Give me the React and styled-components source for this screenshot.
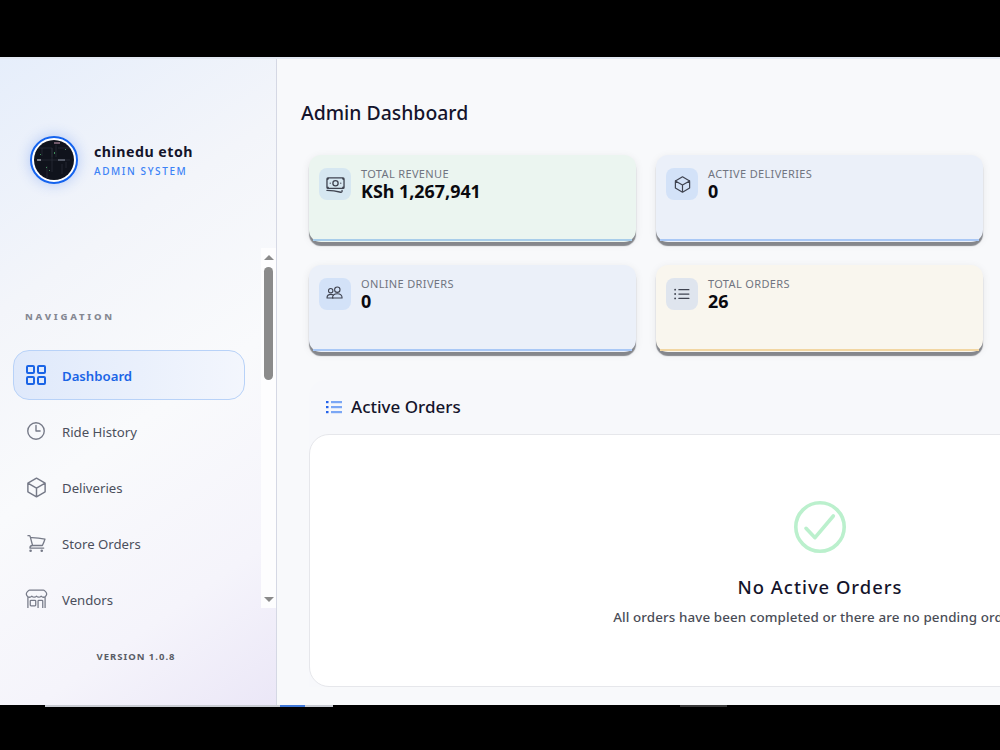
import styled, { createGlobalStyle } from 'styled-components';
import { LayoutGrid } from 'lucide-react';
import {
  HiOutlineClock, HiOutlineCube, HiOutlineShoppingCart,
  HiOutlineBuildingStorefront, HiOutlineBanknotes, HiOutlineListBullet,
} from 'react-icons/hi2';

const GlobalStyle = createGlobalStyle`
  html, body { margin:0; padding:0; height:100%; background:#000; overflow:hidden; }
  * { box-sizing:border-box; }
  body { font-family:"Noto Sans","Open Sans",Arial,sans-serif; }
`;

/* ─── Window ── */
const Screen = styled.div`
  width:1000px; height:750px; display:flex; flex-direction:column; background:#000; overflow:hidden;
`;
const TopBar = styled.div`height:57px; flex-shrink:0; background:#000;`;
const Frame = styled.div`
  height:648px; flex-shrink:0; display:flex; overflow:hidden;
  border-top:2px solid #e3e9f3; background:#f8f9fb;
`;
const BottomBar = styled.div`height:45px; flex-shrink:0; background:#000; display:flex; align-items:flex-start;`;
const StripPart = styled.div`
  height:2px; width:${p => p.$w}px; background:${p => p.$color || 'transparent'}; flex-shrink:0;
`;

/* ─── Sidebar ── */
const Sidebar = styled.aside`
  width:277px; flex-shrink:0; display:flex; flex-direction:column;
  border-right:1px solid #d5d8e4;
  background:linear-gradient(145deg,#e6eefb 0%,#f3f5fa 30%,#f9fafc 55%,#f5f4fb 80%,#ebe7f7 100%);
`;
const Profile = styled.div`
  height:189px; flex-shrink:0; padding:13px 0 0 30px; display:flex; align-items:center; gap:16px;
`;
const Avatar = styled.div`
  width:48px; height:48px; border-radius:50%; flex-shrink:0; padding:2px;
  border:2px solid #1463ee; background:#fff;
  box-shadow:0 0 14px rgba(37,99,235,0.3);
  svg { display:block; width:100%; height:100%; border-radius:50%; }
`;
const ProfileText = styled.div`padding-top:1px;`;
const ProfileName = styled.div`font-size:14.2px; font-weight:700; color:#14142b; letter-spacing:0.5px; line-height:18px;`;
const ProfileRole = styled.div`
  font-size:10px; font-weight:500; color:#3b82f6; letter-spacing:1.6px; line-height:14px; margin-top:3px;
`;

const NavArea = styled.div`height:360px; flex-shrink:0; display:flex; overflow:hidden;`;
const NavList = styled.nav`
  width:261px; flex-shrink:0; padding:62px 16px 0 13px; display:flex; flex-direction:column; gap:6px;
`;
const NavHeading = styled.div`
  font-size:9.5px; font-weight:800; color:#858892; letter-spacing:2.75px; line-height:14px;
  margin:0 0 20px 12px;
`;
const NavItem = styled.a`
  height:50px; flex-shrink:0; display:flex; align-items:center; padding:0 10px;
  border-radius:16px; font-size:13.2px; font-weight:${p => p.$active ? 600 : 400};
  color:${p => p.$active ? '#1a64e6' : '#4b4f5c'};
  border:1px solid ${p => p.$active ? '#b8d2f8' : 'transparent'};
  background:${p => p.$active ? 'linear-gradient(90deg,#dfe9fb,#f3f6fd)' : 'transparent'};
  svg { flex-shrink:0; color:${p => p.$active ? '#1a64e6' : '#767a88'}; }
`;
const NavIconSlot = styled.span`
  width:24px; height:24px; margin-right:14px; flex-shrink:0;
  display:flex; align-items:center; justify-content:center;
`;
const NavText = styled.span`padding-top:2px;`;

const ScrollTrack = styled.div`
  width:15px; flex-shrink:0; background:#fdfdfe; display:flex; flex-direction:column; align-items:center;
`;
const ScrollArrow = styled.div`
  width:0; height:0; flex-shrink:0; margin:${p => p.$down ? 'auto 0 6px' : '7px 0 7px'};
  border-left:5px solid transparent; border-right:5px solid transparent;
  ${p => p.$down ? 'border-top:5px solid #8a8a8a;' : 'border-bottom:5px solid #8a8a8a;'}
`;
const ScrollThumb = styled.div`width:9px; height:113px; border-radius:5px; background:#8b8b8b;`;

const Version = styled.div`
  flex:1; display:flex; align-items:center; justify-content:center;
  font-size:9.5px; font-weight:700; color:#595c66; letter-spacing:1px; padding:0 4px 0 0;
`;

/* ─── Main ── */
const Main = styled.main`flex:1; min-width:0; overflow:hidden; padding:40px 0 0 24px;`;
const PageTitle = styled.h1`
  margin:0; font-size:19.4px; font-weight:500; color:#14142b; line-height:28px;
`;
const Content = styled.div`padding:28px 0 0 8px;`;
const StatsGrid = styled.div`display:grid; grid-template-columns:327px 327px; gap:23px 20px;`;
const StatCard = styled.div`
  height:87px; border-radius:12px; background:${p => p.$bg}; display:flex; flex-direction:column;
  box-shadow:0 4px 1px #85878c, 0 2px 8px rgba(0,0,0,0.08);
`;
const StatBody = styled.div`flex:1; display:flex; gap:10px; padding:13px 10px 0;`;
const IconWrap = styled.div`
  width:32px; height:32px; border-radius:8px; flex-shrink:0; background:${p => p.$bg};
  display:flex; align-items:center; justify-content:center;
  svg { color:#3f4350; }
`;
const StatLbl = styled.div`
  font-size:11px; color:#707480; letter-spacing:0.35px; line-height:12px; text-transform:uppercase;
`;
const StatVal = styled.div`font-size:17.9px; font-weight:700; color:#0a0a0f; line-height:22px;`;
const StatLine = styled.div`height:2px; margin:0 4px 1px; flex-shrink:0; background:${p => p.$color};`;

const Panel = styled.section`
  width:1022px; margin-top:28px; border-radius:16px 16px 0 0; background:#f7f8fb;
`;
const PanelHead = styled.div`
  height:54px; display:flex; align-items:center; gap:9px; padding:0 0 1px 17px;
  font-size:17px; font-weight:500; color:#14142b;
`;
const EmptyCard = styled.div`
  height:253px; background:#fff; border:1px solid #e6e7eb; border-radius:20px;
  display:flex; flex-direction:column; align-items:center; padding-top:66px;
`;
const EmptyTitle = styled.h3`
  margin:21px 0 0; font-size:18.4px; font-weight:500; color:#14142b; letter-spacing:1px; line-height:26px;
`;
const EmptyText = styled.p`
  margin:7px 0 0; font-size:13.4px; font-weight:500; color:#4a4d57; line-height:20px; letter-spacing:0.1px;
  white-space:nowrap;
`;

const DriversIcon = () => (
  <svg width="20" height="18" viewBox="0 0 20 18" fill="none" stroke="currentColor" strokeWidth="1.1">
    <circle cx="5.7" cy="5.7" r="2.2" />
    <circle cx="12.3" cy="4.7" r="2.7" />
    <path d="M2 13c0-2.6 2-3.6 4-3.6 .8 0 1.6 .2 2.2 .5M2 13h6" strokeLinecap="round" />
    <path d="M7.5 13c0-2.8 2.2-4.3 4.8-4.3s4.8 1.5 4.8 4.3z" strokeLinejoin="round" />
  </svg>
);

const OrdersIcon = () => (
  <svg width="16" height="14" viewBox="0 0 16 14">
    {[1, 6, 11].map(y => (
      <g key={y}>
        <rect x="0" y={y} width="2.5" height="2.2" fill="#2563eb" />
        <rect x="5" y={y} width="11" height="2.2" fill="#7ba7f5" />
      </g>
    ))}
  </svg>
);

const DoneIcon = () => (
  <svg width="52" height="52" viewBox="0 0 52 52" fill="none" stroke="#bbf0cd" strokeWidth="3.6">
    <circle cx="26" cy="26" r="24.2" />
    <path d="M12 27.3 21 36.7 39.3 15" strokeLinecap="round" strokeLinejoin="round" />
  </svg>
);

const NAV = [
  { label:'Dashboard', icon:<LayoutGrid size={24} strokeWidth={2} />, active:true },
  { label:'Ride History', icon:<HiOutlineClock size={22} /> },
  { label:'Deliveries', icon:<HiOutlineCube size={23} /> },
  { label:'Store Orders', icon:<HiOutlineShoppingCart size={21} /> },
  { label:'Vendors', icon:<HiOutlineBuildingStorefront size={25} strokeWidth={1.2} /> },
];

const STATS = [
  { label:'Total Revenue', val:'KSh 1,267,941', icon:<HiOutlineBanknotes size={21} />, bg:'#ebf5f0', iconBg:'#d6e7f1', line:'#a8cdea' },
  { label:'Active Deliveries', val:'0', icon:<HiOutlineCube size={19} />, bg:'#ebf0f9', iconBg:'#d3e2f8', line:'#a9c8f6' },
  { label:'Online Drivers', val:'0', icon:<DriversIcon />, bg:'#ebf0f9', iconBg:'#d3e2f8', line:'#a9c8f6' },
  { label:'Total Orders', val:'26', icon:<HiOutlineListBullet size={20} />, bg:'#f9f6ee', iconBg:'#dfe5ee', line:'#f2d6a2' },
];

const AvatarArt = () => (
  <svg viewBox="0 0 40 40">
    <rect width="40" height="40" fill="#10131c" />
    <g stroke="#343947" strokeWidth="0.5" fill="none">
      <path d="M4 8h14v9M22 5v12M24 8h14M13 26v12M4 20h32M28 24v10M18 8v24M8 8v8M32 22v6" />
    </g>
    <rect x="20" y="2.5" width="6" height="1" fill="#d0a0b8" />
    <rect x="3" y="19.5" width="4" height="1" fill="#e4e6ee" />
    <rect x="24" y="19.5" width="7" height="1" fill="#8e93a3" />
    <g fill="#3f8f5a">
      <rect x="6" y="14" width="1" height="1" />
      <rect x="20" y="12" width="1" height="2" />
      <rect x="31" y="9" width="1" height="1" />
      <rect x="15" y="30" width="1" height="1" />
      <rect x="12" y="27" width="1" height="1" />
    </g>
  </svg>
);

export default function App() {
  return (
    <Screen>
      <GlobalStyle />
      <TopBar />
      <Frame>
        <Sidebar>
          <Profile>
            <Avatar><AvatarArt /></Avatar>
            <ProfileText>
              <ProfileName>chinedu etoh</ProfileName>
              <ProfileRole>ADMIN SYSTEM</ProfileRole>
            </ProfileText>
          </Profile>
          <NavArea>
            <NavList>
              <NavHeading>NAVIGATION</NavHeading>
              {NAV.map(({ label, icon, active }) => (
                <NavItem key={label} $active={active}>
                  <NavIconSlot>{icon}</NavIconSlot>
                  <NavText>{label}</NavText>
                </NavItem>
              ))}
            </NavList>
            <ScrollTrack>
              <ScrollArrow />
              <ScrollThumb />
              <ScrollArrow $down />
            </ScrollTrack>
          </NavArea>
          <Version>VERSION 1.0.8</Version>
        </Sidebar>
        <Main>
          <PageTitle>Admin Dashboard</PageTitle>
          <Content>
            <StatsGrid>
              {STATS.map(({ label, val, icon, bg, iconBg, line }) => (
                <StatCard key={label} $bg={bg}>
                  <StatBody>
                    <IconWrap $bg={iconBg}>{icon}</IconWrap>
                    <div>
                      <StatLbl>{label}</StatLbl>
                      <StatVal>{val}</StatVal>
                    </div>
                  </StatBody>
                  <StatLine $color={line} />
                </StatCard>
              ))}
            </StatsGrid>
            <Panel>
              <PanelHead><OrdersIcon />Active Orders</PanelHead>
              <EmptyCard>
                <DoneIcon />
                <EmptyTitle>No Active Orders</EmptyTitle>
                <EmptyText>All orders have been completed or there are no pending orders.</EmptyText>
              </EmptyCard>
            </Panel>
          </Content>
        </Main>
      </Frame>
      <BottomBar>
        <StripPart $w={45} />
        <StripPart $w={235} $color="#c9ccd3" />
        <StripPart $w={25} $color="#3f78d8" />
        <StripPart $w={28} $color="#c9ccd3" />
        <StripPart $w={347} />
        <StripPart $w={47} $color="#3a3a3a" />
      </BottomBar>
    </Screen>
  );
}
